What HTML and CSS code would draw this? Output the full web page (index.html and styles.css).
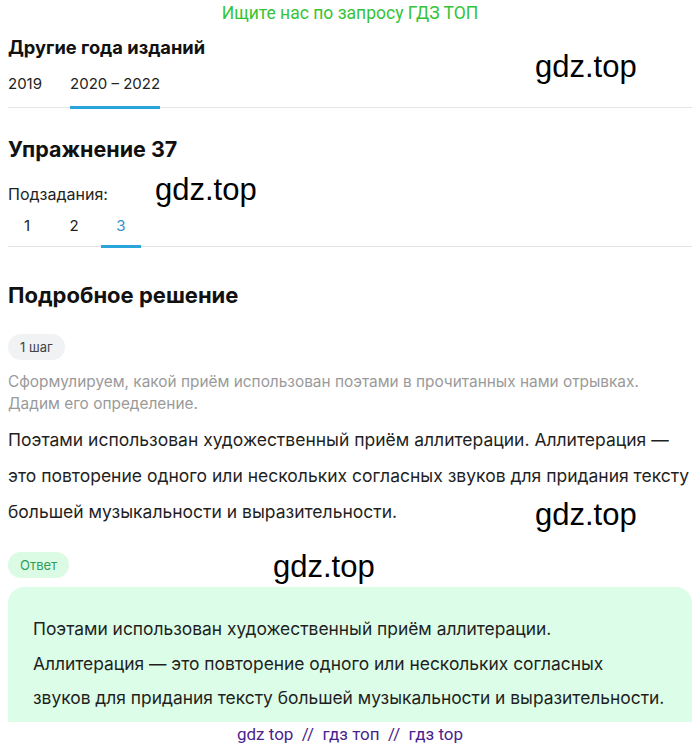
FILE: index.html
```html
<!DOCTYPE html>
<html lang="ru">
<head>
  <meta charset="UTF-8">
  <meta name="viewport" content="width=device-width, initial-scale=1.0">
  <title>Упражнение 37</title>
  <link rel="stylesheet" href="styles.css">
</head>
<body>

  <div class="promo">Ищите нас по запросу ГДЗ ТОП</div>

  <div class="page">
    <!-- Editions -->
    <section class="editions">
      <h2 class="block-title">Другие года изданий</h2>
      <nav class="tabs">
        <a class="tab" href="#">2019</a>
        <a class="tab active" href="#">2020 – 2022</a>
      </nav>
    </section>

    <!-- Exercise -->
    <section class="exercise">
      <h1 class="title">Упражнение 37</h1>
      <div class="subtasks-label">Подзадания:</div>
      <nav class="tabs subtabs">
        <a class="tab" href="#">1</a>
        <a class="tab" href="#">2</a>
        <a class="tab active" href="#">3</a>
      </nav>
    </section>

    <!-- Solution -->
    <section class="solution">
      <h2 class="title">Подробное решение</h2>
      <span class="pill">1 шаг</span>
      <p class="hint">Сформулируем, какой приём использован поэтами в прочитанных нами отрывках. Дадим его определение.</p>
      <p class="text">Поэтами использован художественный приём аллитерации. Аллитерация — это повторение одного или нескольких согласных звуков для придания тексту большей музыкальности и выразительности.</p>

      <span class="pill pill-answer">Ответ</span>
      <div class="answer">
        <p>Поэтами использован художественный приём аллитерации.</p>
        <p>Аллитерация — это повторение одного или нескольких согласных<br>звуков для придания тексту большей музыкальности и выразительности.</p>
      </div>
    </section>

    <span class="mark mark-1">gdz.top</span>
    <span class="mark mark-2">gdz.top</span>
    <span class="mark mark-3">gdz.top</span>
    <span class="mark mark-4">gdz.top</span>
  </div>

  <div class="footer">gdz top &nbsp;//&nbsp; гдз топ &nbsp;//&nbsp; гдз top</div>

</body>
</html>
```

FILE: styles.css
```css
body {
  margin: 0;
  padding: 0 8px;
  font-family: Inter, "Noto Sans", sans-serif;
  color: #1f1f1f;
  background-color: #fff;
}

.promo {
  text-align: center;
  font-family: Roboto, sans-serif;
  font-size: 17.5px;
  line-height: 26px;
  color: #35c435;
}

.page {
  position: relative;
}

a {
  text-decoration: none;
  color: inherit;
}

.block-title {
  margin: 0;
  padding-top: 8px;
  font-size: 18.3px;
  line-height: 26px;
  font-weight: 700;
  color: #111;
}

.tabs {
  display: flex;
  gap: 28px;
  border-bottom: 1px solid #e5e5e5;
}

.tab {
  display: block;
  padding: 14px 0 12px;
  font-size: 15px;
  line-height: 20px;
  color: #222;
  border-bottom: 3px solid transparent;
  margin-bottom: -2px;
}

.tab.active {
  border-bottom-color: #2aa5dc;
}

.title {
  margin: 0;
  font-size: 22px;
  line-height: 30px;
  font-weight: 700;
  color: #111;
}

.exercise .title {
  margin-top: 26px;
  font-size: 21.5px;
}

.subtasks-label {
  margin-top: 20px;
  font-size: 16px;
  line-height: 20px;
  color: #222;
}

.subtabs {
  gap: 0;
  margin-top: 2px;
}

.subtabs .tab {
  width: 40px;
  padding: 10px 0 9px;
  text-align: center;
  font-size: 15px;
  margin-left: 7px;
}

.subtabs .tab:first-child {
  margin-left: -1px;
}

.subtabs .tab.active {
  color: #3a8fc8;
}

.solution .title {
  margin-top: 33px;
}

.pill {
  display: inline-block;
  margin-top: 24px;
  padding: 0 12px;
  font-size: 13px;
  line-height: 26px;
  border-radius: 13px;
  background-color: #f1f2f4;
  color: #444;
}

.hint {
  margin: 11px 0 0;
  font-size: 15.4px;
  line-height: 22px;
  color: #9a9a9a;
}

.text {
  margin: 0;
  padding-top: 7px;
  font-size: 17.5px;
  line-height: 36px;
  color: #1f1f1f;
}

.pill-answer {
  margin-top: 22px;
  background-color: #dbfbe5;
  color: #2f9d55;
}

.answer {
  margin-top: 9px;
  padding: 25px 20px 30px 25px;
  border-radius: 16px;
  background-color: #dcfde7;
}

.answer p {
  margin: 0;
  font-size: 17.4px;
  line-height: 34.5px;
  color: #1f1f1f;
}

.mark {
  position: absolute;
  font-family: "Liberation Sans", Arial, sans-serif;
  font-size: 31px;
  line-height: 36px;
  color: #000;
}

.mark-1 { left: 527px; top: 23px; }
.mark-2 { left: 147px; top: 146px; }
.mark-3 { left: 527px; top: 471px; }
.mark-4 { left: 265px; top: 523px; }

.footer {
  position: fixed;
  left: 0;
  right: 0;
  bottom: 0;
  height: 27px;
  background-color: #fff;
  text-align: center;
  font-family: Roboto, sans-serif;
  font-size: 17px;
  line-height: 25px;
  color: #4b1f8c;
}
```
